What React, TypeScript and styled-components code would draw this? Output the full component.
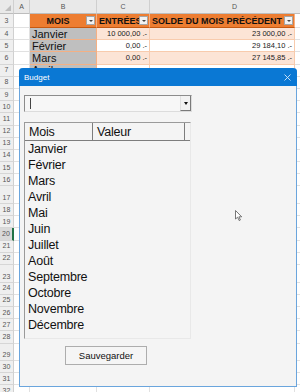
import styled, { createGlobalStyle } from 'styled-components';

const GlobalStyle = createGlobalStyle`
	body {
		margin: 0;
		font-family: 'Liberation Sans', Arial, sans-serif;
		background: #ffffff;
	}
`;

const Screen = styled.div`
	position: relative;
	width: 300px;
	height: 392px;
	overflow: hidden;
	background: #ffffff;
`;

const Sheet = styled.div`
	display: flex;
	flex-direction: column;
	width: 330px;
`;

const Row = styled.div<{ h: number }>`
	display: flex;
	height: ${(p) => p.h}px;
	flex-shrink: 0;
`;

const Corner = styled.div`
	position: relative;
	width: 14px;
	flex-shrink: 0;
	background: #e9e9e9;
	border-right: 1px solid #d0d0d0;
	border-bottom: 1px solid #bdbdbd;
	box-sizing: border-box;

	&::after {
		content: '';
		position: absolute;
		right: 2px;
		bottom: 2px;
		border-left: 6px solid transparent;
		border-bottom: 6px solid #bdbdbd;
	}
`;

const ColHead = styled.div<{ w: number }>`
	width: ${(p) => p.w}px;
	flex-shrink: 0;
	box-sizing: border-box;
	background: #e9e9e9;
	border-right: 1px solid #cfcfcf;
	border-bottom: 1px solid #bdbdbd;
	color: #555;
	font-size: 7px;
	display: flex;
	align-items: center;
	justify-content: center;
`;

const RowNum = styled.div<{ bottom?: boolean; active?: boolean }>`
	width: 14px;
	flex-shrink: 0;
	box-sizing: border-box;
	background: ${(p) => (p.active ? '#d9d9d9' : '#efefef')};
	border-right: ${(p) => (p.active ? '2px solid #217346' : '1px solid #d0d0d0')};
	border-bottom: 1px solid #d6d6d6;
	color: #555;
	font-size: 7px;
	line-height: 8px;
	display: flex;
	justify-content: center;
	align-items: ${(p) => (p.bottom ? 'flex-end' : 'center')};
	padding-bottom: ${(p) => (p.bottom ? '1px' : '0')};
	overflow: hidden;
`;

const Cell = styled.div<{ w: number; bg?: string; line?: string; align?: string }>`
	position: relative;
	width: ${(p) => p.w}px;
	flex-shrink: 0;
	box-sizing: border-box;
	background: ${(p) => p.bg || '#ffffff'};
	border-right: 1px solid ${(p) => p.line || '#e1e1e1'};
	border-bottom: 1px solid ${(p) => p.line || '#e1e1e1'};
	display: flex;
	align-items: center;
	justify-content: ${(p) => p.align || 'flex-start'};
	overflow: hidden;
	white-space: nowrap;
	color: #111;
`;

const HeadCell = styled(Cell)`
	background: #ed7d31;
	border-right: 1px solid #f4b084;
	border-bottom: 1px solid #c65911;
	font-weight: bold;
	font-size: 9px;
	padding: 0 12px 0 2px;
`;

const Filter = styled.span`
	position: absolute;
	right: 1px;
	top: 2px;
	width: 9px;
	height: 9px;
	box-sizing: border-box;
	background: #f2f2f2;
	border: 1px solid #a6a6a6;
	display: flex;
	align-items: center;
	justify-content: center;

	&::after {
		content: '';
		border-left: 2px solid transparent;
		border-right: 2px solid transparent;
		border-top: 2px solid #444;
	}
`;

const MonthText = styled.span`
	font-size: 11px;
	padding-left: 2px;
`;

const Amount = styled.span`
	font-size: 7.5px;
	padding-right: 2px;
	color: #222;
`;

const Dialog = styled.div`
	position: absolute;
	left: 19px;
	top: 68px;
	width: 278px;
	height: 319px;
	box-sizing: border-box;
	border: 1px solid #6aa5dd;
	border-top: none;
	border-radius: 4px 4px 0 0;
	background: #f4f4f4;
	display: flex;
	flex-direction: column;
`;

const TitleBar = styled.div`
	height: 18px;
	margin: 0 -1px;
	flex-shrink: 0;
	background: #0a78d4;
	border-radius: 4px 4px 0 0;
	display: flex;
	align-items: center;
	justify-content: space-between;
	padding: 0 6px 0 5px;
`;

const Title = styled.span`
	color: #ffffff;
	font-size: 8px;
`;

const Body = styled.div`
	display: flex;
	flex-direction: column;
	align-items: flex-start;
	padding: 9px 0 0 4px;
`;

const Combo = styled.div`
	width: 168px;
	height: 17px;
	box-sizing: border-box;
	border-top: 1px solid #8c8c8c;
	border-left: 1px solid #8c8c8c;
	border-right: 1px solid #dcdcdc;
	border-bottom: 1px solid #dcdcdc;
	background: #f7f7f7;
	display: flex;
	align-items: stretch;
	padding-left: 5px;
`;

const Caret = styled.span`
	width: 1px;
	height: 11px;
	margin-top: 2px;
	background: #444;
`;

const ComboSpacer = styled.div`
	flex: 1;
`;

const DropButton = styled.div`
	width: 11px;
	box-sizing: border-box;
	border-left: 1px solid #e0e0e0;
	border-right: 1px solid #7a7a7a;
	border-bottom: 1px solid #7a7a7a;
	background: #f2f2f2;
	display: flex;
	align-items: center;
	justify-content: center;

	&::after {
		content: '';
		border-left: 2.5px solid transparent;
		border-right: 2.5px solid transparent;
		border-top: 3px solid #111;
	}
`;

const ListBox = styled.div`
	margin-top: 10px;
	width: 167px;
	height: 217px;
	box-sizing: border-box;
	border-top: 1px solid #9a9a9a;
	border-left: 1px solid #9a9a9a;
	border-right: 1px solid #e8e8e8;
	border-bottom: 1px solid #e8e8e8;
	display: flex;
	flex-direction: column;
	font-size: 12.5px;
	letter-spacing: -0.2px;
	color: #111;
`;

const ListHeader = styled.div`
	display: flex;
	height: 18px;
	flex-shrink: 0;
	border-bottom: 1px solid #7d7d7d;
	box-sizing: border-box;
`;

const HeaderCell = styled.div<{ w: number }>`
	width: ${(p) => p.w}px;
	flex-shrink: 0;
	box-sizing: border-box;
	border-right: 1px solid #7d7d7d;
	padding: 2px 0 0 4px;
`;

const Item = styled.div`
	height: 16px;
	line-height: 16px;
	padding-left: 3px;
`;

const SaveButton = styled.button`
	margin: 7px 0 0 41px;
	width: 82px;
	height: 19px;
	box-sizing: border-box;
	border: 1px solid #adadad;
	background: #f5f5f5;
	font-family: 'Liberation Sans', Arial, sans-serif;
	font-size: 9.5px;
	color: #111;
	padding: 0;
`;

const Pointer = styled.svg`
	position: absolute;
	left: 235px;
	top: 210px;
`;

type SheetRow = { n: number; h: number; bottom?: boolean; inTable: boolean; month?: string; c?: string; d?: string };

const months = ['Janvier', 'Février', 'Mars', 'Avril', 'Mai', 'Juin', 'Juillet', 'Août', 'Septembre', 'Octobre', 'Novembre', 'Décembre'];
const entrees = ['10 000,00 .-', '0,00 .-', '0,00 .-', '0,00 .-'];
const soldes = ['23 000,00 .-', '29 184,10 .-', '27 145,85 .-', '31 147,30 .-'];

const tallRows = [17, 23, 29];

// rows 8+ of the table lie under the dialog, so only the visible ones carry text
const sheetRows: SheetRow[] = [];
for (let n = 4; n <= 32; n++) {
	const idx = n - 4;
	const tall = tallRows.includes(n);
	sheetRows.push({
		n,
		h: tall ? 17.6 : 12.2,
		bottom: tall,
		inTable: idx < 12,
		month: idx < 4 ? months[idx] : undefined,
		c: entrees[idx],
		d: soldes[idx],
	});
}

export default function App() {
	return (
		<>
			<GlobalStyle />
			<Screen>
				<Sheet>
					<Row h={14}>
						<Corner />
						<ColHead w={16}>A</ColHead>
						<ColHead w={67}>B</ColHead>
						<ColHead w={53}>C</ColHead>
						<ColHead w={170}>D</ColHead>
					</Row>
					<Row h={14}>
						<RowNum>3</RowNum>
						<Cell w={16} />
						<HeadCell w={67} align="center">
							MOIS
							<Filter />
						</HeadCell>
						<HeadCell w={53}>
							ENTRÉES
							<Filter />
						</HeadCell>
						<HeadCell w={145}>
							SOLDE DU MOIS PRÉCÉDENT
							<Filter />
						</HeadCell>
						<Cell w={25} />
					</Row>
					{sheetRows.map((r) => {
						const peach = r.inTable && (r.n - 4) % 2 === 0;
						const tint = peach ? '#fce4d6' : '#ffffff';
						return (
							<Row key={r.n} h={r.h}>
								<RowNum bottom={r.bottom} active={r.n === 20}>
									{r.n}
								</RowNum>
								<Cell w={16} />
								<Cell w={67} bg={r.inTable ? '#bfbfbf' : undefined} line={r.inTable ? '#f4b084' : undefined}>
									{r.month && <MonthText>{r.month}</MonthText>}
								</Cell>
								<Cell w={53} bg={r.inTable ? tint : undefined} line={r.inTable ? '#f8cbad' : undefined} align="flex-end">
									{r.c && <Amount>{r.c}</Amount>}
								</Cell>
								<Cell w={145} bg={r.inTable ? tint : undefined} line={r.inTable ? '#f8cbad' : undefined} align="flex-end">
									{r.d && <Amount>{r.d}</Amount>}
								</Cell>
								<Cell w={25} />
							</Row>
						);
					})}
				</Sheet>

				<Dialog>
					<TitleBar>
						<Title>Budget</Title>
						<svg width="7" height="7" viewBox="0 0 7 7">
							<path d="M0.5 0.5 L6.5 6.5 M6.5 0.5 L0.5 6.5" stroke="#d6e8f8" strokeWidth="0.9" />
						</svg>
					</TitleBar>
					<Body>
						<Combo>
							<Caret />
							<ComboSpacer />
							<DropButton />
						</Combo>
						<ListBox>
							<ListHeader>
								<HeaderCell w={68}>Mois</HeaderCell>
								<HeaderCell w={92}>Valeur</HeaderCell>
							</ListHeader>
							{months.map((m) => (
								<Item key={m}>{m}</Item>
							))}
						</ListBox>
						<SaveButton>Sauvegarder</SaveButton>
					</Body>
				</Dialog>

				<Pointer width="8" height="12" viewBox="0 0 8 12">
					<path d="M0.5 0.5 L0.5 9 L2.6 7.2 L4.2 10.6 L5.4 10 L3.9 6.8 L6.7 6.8 Z" fill="#ffffff" stroke="#555" strokeWidth="0.8" />
				</Pointer>
			</Screen>
		</>
	);
}
